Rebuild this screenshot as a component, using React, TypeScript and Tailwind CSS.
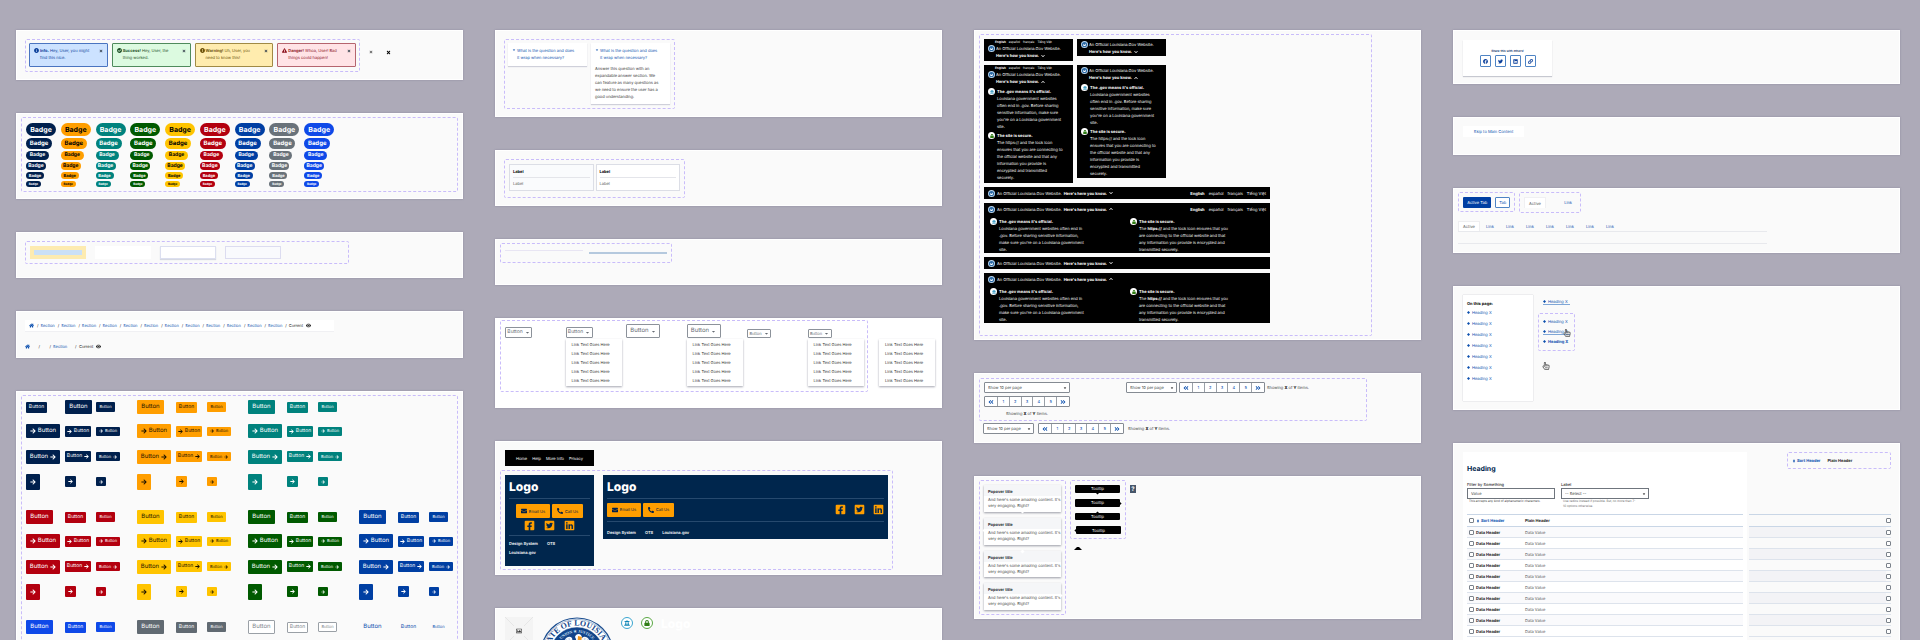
import type { ReactNode } from "react";
import {
  FaAngleDoubleLeft,
  FaAngleDoubleRight,
  FaArrowRight,
  FaCaretDown,
  FaCheckCircle,
  FaChevronDown,
  FaChevronUp,
  FaEnvelope,
  FaExclamationCircle,
  FaExclamationTriangle,
  FaEye,
  FaFacebook,
  FaFacebookSquare,
  FaHome,
  FaInfoCircle,
  FaLink,
  FaLinkedin,
  FaLock,
  FaPhoneAlt,
  FaRegHandPointer,
  FaRegImage,
  FaSort,
  FaTimes,
  FaTwitter,
  FaTwitterSquare,
  FaUniversity,
} from "react-icons/fa";

type Box = { className?: string; children?: ReactNode };

function Panel({ className = "", children }: Box) {
  return <section className={`border border-white bg-[#fafafa] shadow-[0_0_2px_#8f8b9e] ${className}`}>{children}</section>;
}

function Frame({ className = "", children }: Box) {
  return <div className={`shrink-0 rounded-[2px] border border-dashed border-[#c9bcfa] ${className}`}>{children}</div>;
}

function Lines({ lines }: { lines: ReactNode[] }) {
  return (
    <>
      {lines.map((line, i) => (
        <span key={i} className="block whitespace-nowrap">
          {line}
        </span>
      ))}
    </>
  );
}

/* ---------- Column one ---------- */

const alerts = [
  { tone: "border-[#4a74c0] bg-[#cce2ff] text-[#0b3f9a]", icon: <FaInfoCircle />, title: "Info.", rest: " Hey, User, you might", second: "find this nice." },
  { tone: "border-[#4f8a5c] bg-[#dcfae0] text-[#1d4f26]", icon: <FaCheckCircle />, title: "Success!", rest: " Hey, User, the", second: "thing worked." },
  { tone: "border-[#a08a45] bg-[#ffecae] text-[#6b5008]", icon: <FaExclamationCircle />, title: "Warning!", rest: " Uh, User, you", second: "need to know this!" },
  { tone: "border-[#b5646e] bg-[#ffe3e6] text-[#8a0f1c]", icon: <FaExclamationTriangle />, title: "Danger!", rest: " Whoa, User! Bad", second: "things could happen!" },
];

function AlertsPanel() {
  return (
    <Panel className="flex min-h-[50px] gap-[9px] px-2 pt-2">
      <Frame className="grid h-[33px] w-[335px] grid-cols-4 gap-1 p-[3px]">
        {alerts.map((a) => (
          <div key={a.title} role="alert" className={`flex h-6 items-start gap-px rounded-[1px] border px-1 pt-[3px] ${a.tone}`}>
            <span className="pt-[1px] text-[5px]">{a.icon}</span>
            <p className="grow">
              <Lines lines={[<><b>{a.title}</b>{a.rest}</>, a.second]} />
            </p>
            <button aria-label="Dismiss" className="pt-[2px] text-[4px] text-[#35404c]">
              <FaTimes />
            </button>
          </div>
        ))}
      </Frame>
      <button aria-label="Close" className="mt-[11px] self-start text-[4px] text-[#555]">
        <FaTimes />
      </button>
      <button aria-label="Close" className="mt-[11px] ml-1 self-start text-[5px] text-black">
        <FaTimes />
      </button>
    </Panel>
  );
}

const badgeTones = [
  "bg-[#00204d] text-white",
  "bg-[#ff9e00] text-black",
  "bg-[#00827d] text-white",
  "bg-[#005a00] text-white",
  "bg-[#ffc400] text-black",
  "bg-[#b3000f] text-white",
  "bg-[#003fa3] text-white",
  "bg-[#69727a] text-white",
  "bg-[#0f49e8] text-white",
];
const badgeSizes = [
  "h-[13px] w-[30px] text-[7px]",
  "h-[11px] w-[26px] text-[6px]",
  "h-[9px] w-[23px] text-[5px]",
  "h-[8px] w-[20px] text-[5px]",
  "h-[7px] w-[18px] text-[4px]",
  "h-[6px] w-[15px] text-[3px]",
];

function BadgesPanel() {
  return (
    <Panel className="min-h-[86px] px-1 pt-[3px]">
      <Frame className="h-[75px] w-full px-1 pt-[5px]">
        <div className="grid w-[313px] grid-cols-9">
          {badgeTones.map((tone) => (
            <div key={tone} className="flex flex-col items-start gap-[2px]">
              {badgeSizes.map((size) => (
                <span key={size} className={`flex items-center justify-center rounded-full font-bold ${size} ${tone}`}>
                  Badge
                </span>
              ))}
            </div>
          ))}
        </div>
      </Frame>
    </Panel>
  );
}

function SurfacesPanel() {
  return (
    <Panel className="min-h-[46px] px-2 pt-2">
      <Frame className="flex h-[23px] w-[324px] gap-[9px] p-1">
        <div className="h-[13px] w-14 bg-[#fdebb0] p-1">
          <div className="h-[5px] bg-[#cbe0f6]" />
        </div>
        <div className="h-[13px] w-14 bg-white" />
        <div className="h-[13px] w-14 border border-[#dcdff0] bg-white shadow-[0_1px_1px_#d5d8e2]" />
        <div className="h-[13px] w-14 border border-[#dcdcf0] bg-[#f9fafd]" />
      </Frame>
    </Panel>
  );
}

function BreadcrumbPanel() {
  return (
    <Panel className="flex min-h-[47px] flex-col items-start gap-2 px-2 pt-2 text-[#222]">
      <nav aria-label="Breadcrumb" className="flex h-[12px] w-[309px] items-center gap-[2px] border-b border-[#f0f0f3] bg-white px-1">
        <a href="#home" aria-label="Home" className="text-[5px] text-[#0b4fae]">
          <FaHome />
        </a>
        {Array.from({ length: 12 }, (_, i) => (
          <span key={i} className="flex gap-[2px] pl-[1px]">
            <span>/</span>
            <a href="#section" className="text-[#0b4fae]">
              Section
            </a>
          </span>
        ))}
        <span className="pl-px">/</span>
        <span>Current</span>
        <FaEye className="ml-px text-[5px]" />
      </nav>
      <nav aria-label="Collapsed breadcrumb" className="flex h-[12px] items-center">
        <a href="#home" aria-label="Home" className="text-[5px] text-[#0b4fae]">
          <FaHome />
        </a>
        <span className="w-[10px] text-right">/</span>
        <span className="w-[11px] text-right">/</span>
        <a href="#section" className="w-[24px] pl-[2px] text-[#0b4fae]">
          Section
        </a>
        <span className="w-1">/</span>
        <span>Current</span>
        <FaEye className="ml-[3px] text-[5px]" />
      </nav>
    </Panel>
  );
}

type Size = "lg" | "md" | "sm";
const textSize: Record<Size, string> = { lg: "text-[6px]", md: "text-[5px]", sm: "text-[4px]" };
const plainSize: Record<Size, string> = { lg: "h-[14px] w-[27px]", md: "h-[11px] w-[21px]", sm: "h-[10px] w-[19px]" };
const iconSize: Record<Size, string> = { lg: "h-[14px] w-[34px]", md: "h-[11px] w-[26px]", sm: "h-[9px] w-[24px]" };
const squareSize: Record<Size, string> = { lg: "h-4 w-[14px]", md: "h-[11px] w-[11px]", sm: "h-[9px] w-[10px]" };
type Kind = "plain" | "before" | "after" | "only";

function Btn({ tone, size, kind = "plain" }: { tone: string; size: Size; kind?: Kind }) {
  const dims = kind === "plain" ? plainSize[size] : kind === "only" ? squareSize[size] : iconSize[size];
  return (
    <button
      aria-label={kind === "only" ? "Next" : undefined}
      className={`flex items-center justify-center gap-[2px] rounded-[1px] leading-none ${dims} ${textSize[size]} ${tone}`}
    >
      {(kind === "before" || kind === "only") && <FaArrowRight />}
      {kind !== "only" && "Button"}
      {kind === "after" && <FaArrowRight />}
    </button>
  );
}

const kinds: Kind[] = ["plain", "before", "after", "only"];
const sizes: Size[] = ["lg", "md", "sm"];

function BtnGroup({ tone, mediumFirst = false, rows = kinds }: { tone: string; mediumFirst?: boolean; rows?: Kind[] }) {
  return (
    <div className="grid w-[111px] shrink-0 grid-cols-[39px_31px_auto] grid-rows-[22px_26px_25px_25px] items-center">
      {rows.map((kind) =>
        sizes.map((size, i) => (
          <Btn key={kind + size} tone={tone} kind={kind} size={mediumFirst && kind === "plain" && i < 2 ? (i === 0 ? "md" : "lg") : size} />
        )),
      )}
    </div>
  );
}

function ButtonsPanel() {
  return (
    <Panel className="min-h-[330px] px-1 pt-[3px]">
      <Frame className="flex h-[320px] w-full flex-col gap-3 px-1">
        <div className="flex">
          <BtnGroup tone="bg-[#00204d] text-white" mediumFirst />
          <BtnGroup tone="bg-[#ff9e00] text-[#1c1300]" />
          <BtnGroup tone="bg-[#00827d] text-white" />
        </div>
        <div className="flex">
          <BtnGroup tone="bg-[#b3000f] text-white" />
          <BtnGroup tone="bg-[#ffc400] text-[#1c1300]" />
          <BtnGroup tone="bg-[#005a00] text-white" />
          <BtnGroup tone="bg-[#003fa3] text-white" />
        </div>
        <div className="flex">
          <BtnGroup tone="bg-[#0f49e8] text-white" rows={["plain"]} />
          <BtnGroup tone="bg-[#616a72] text-white" rows={["plain"]} />
          <BtnGroup tone="border border-[#9aa0a6] bg-white text-[#80868c]" rows={["plain"]} />
          <BtnGroup tone="text-[#0b4fae]" rows={["plain"]} />
        </div>
      </Frame>
    </Panel>
  );
}

/* ---------- Column two ---------- */

function Question() {
  return (
    <h3 className="flex gap-px text-[#0b4fae]">
      <FaCaretDown className="mt-px text-[4px]" />
      <span>
        <Lines lines={["What is the question and does", "it wrap when necessary?"]} />
      </span>
    </h3>
  );
}

function AccordionPanel() {
  return (
    <Panel className="min-h-[87px] px-2 pt-2">
      <Frame className="flex h-[70px] w-[171px] items-start gap-1 p-[3px]">
        <div className="h-[23px] w-[79px] bg-white px-1 pt-1 shadow-[0_1px_1px_#cfd0da]">
          <Question />
        </div>
        <div className="h-[61px] w-[79px] bg-white px-1 pt-1 shadow-[0_1px_1px_#cfd0da]">
          <Question />
          <p className="mt-1 text-[#333]">
            <Lines
              lines={[
                "Answer this question with an",
                "expandable answer section. We",
                "can feature as many questions as",
                "we need to ensure the user has a",
                "good understanding.",
              ]}
            />
          </p>
        </div>
      </Frame>
    </Panel>
  );
}

function LabelsPanel() {
  return (
    <Panel className="min-h-[56px] px-2 pt-2">
      <Frame className="flex h-[39px] w-[181px] items-start gap-[2px] p-1">
        {["bg-[#fafbfd]", "bg-white"].map((bg) => (
          <div key={bg} className={`h-[27px] w-[85px] border border-[#dcdee6] px-[3px] pt-[3px] ${bg}`}>
            <p className="font-bold text-black">Label</p>
            <hr className="my-[2px] border-[#e4e5ea]" />
            <p className="text-[#555]">Label</p>
          </div>
        ))}
      </Frame>
    </Panel>
  );
}

function DividersPanel() {
  return (
    <Panel className="min-h-[46px] px-1 pt-[3px]">
      <Frame className="flex h-5 w-[172px] gap-[6px] px-1 pt-[6px]">
        <hr className="w-[78px] border-[#e8e5f3]" />
        <hr className="mt-[2px] w-[78px] border-t-2 border-[#b5c9de]" />
      </Frame>
    </Panel>
  );
}

function Menu() {
  return (
    <ul className="mt-px w-14 bg-white px-[6px] py-px text-[#333] shadow-[0_1px_2px_#a4a6b0]">
      {[0, 1, 2, 3, 4].map((i) => (
        <li key={i} className="h-[9px] pt-px whitespace-nowrap">
          <a href="#link">Link Text Goes Here</a>
        </li>
      ))}
    </ul>
  );
}

const dropdowns = [
  { size: "h-[11px] w-[27px] text-[5px]", open: false },
  { size: "h-[11px] w-[27px] text-[5px]", open: true },
  { size: "h-[14px] w-[34px] text-[6px]", open: false },
  { size: "h-[14px] w-[34px] text-[6px]", open: true },
  { size: "h-[9px] w-[24px] text-[4px]", open: false },
  { size: "h-[9px] w-[24px] text-[4px]", open: true },
];

function DropdownsPanel() {
  return (
    <Panel className="flex min-h-[90px] bg-white px-1 pt-px">
      <Frame className="flex h-[72px] w-[368px] px-1 pt-[3px]">
        <div className="grid w-[363px] shrink-0 grid-cols-6">
          {dropdowns.map((d, i) => (
            <div key={i}>
              <div className="flex h-[14px] items-end">
                <button className={`flex items-center justify-center gap-[2px] rounded-[1px] border border-[#8c929a] bg-white leading-none text-[#656b73] ${d.size}`}>
                  Button <FaCaretDown className="text-[5px]" />
                </button>
              </div>
              {d.open && <Menu />}
            </div>
          ))}
        </div>
      </Frame>
      <div className="pt-[18px] pl-[11px]">
        <Menu />
      </div>
    </Panel>
  );
}

function ContactButtons() {
  return (
    <div className="flex gap-[2px] text-[4px] text-[#00204d]">
      <button className="flex h-[14px] w-[34px] items-center justify-center gap-[2px] rounded-[1px] bg-[#ff9e00]">
        <FaEnvelope className="text-[6px]" /> Email Us
      </button>
      <button className="flex h-[14px] w-[31px] items-center justify-center gap-[2px] rounded-[1px] bg-[#ff9e00]">
        <FaPhoneAlt className="text-[6px]" /> Call Us
      </button>
    </div>
  );
}

function Socials({ className = "" }: Box) {
  return (
    <div className={`flex text-[11px] text-[#ff9e00] ${className}`}>
      <a href="#facebook" aria-label="Facebook"><FaFacebookSquare /></a>
      <a href="#twitter" aria-label="Twitter"><FaTwitterSquare /></a>
      <a href="#linkedin" aria-label="LinkedIn"><FaLinkedin /></a>
    </div>
  );
}

function FooterPanel() {
  return (
    <Panel className="min-h-[134px] pt-2">
      <nav aria-label="Utility" className="ml-[9px] flex h-4 w-[89px] items-center justify-center gap-[5px] bg-black text-white">
        <a href="#home">Home</a>
        <a href="#help">Help</a>
        <a href="#info">More Info</a>
        <a href="#privacy">Privacy</a>
      </nav>
      <Frame className="mt-1 ml-1 flex h-[100px] w-[393px] items-start gap-[9px] p-1">
        <footer className="h-[91px] w-[89px] bg-[#00264d] px-1 text-white">
          <p className="h-[23px] pt-[6px] text-[12px] leading-[12px] font-extrabold">Logo</p>
          <hr className="border-[#26496e]" />
          <div className="flex flex-col items-center gap-[2px] pt-[5px]">
            <ContactButtons />
            <Socials className="gap-[9px]" />
          </div>
          <hr className="mt-1 border-[#26496e]" />
          <div className="flex flex-wrap gap-x-[9px] gap-y-[2px] pt-1 font-semibold">
            <a href="#ds">Design System</a>
            <a href="#ots">OTS</a>
            <a href="#la" className="w-full">Louisiana.gov</a>
          </div>
        </footer>
        <footer className="h-[64px] w-[285px] bg-[#00264d] px-1 text-white">
          <p className="h-[23px] pt-[6px] text-[12px] leading-[12px] font-extrabold">Logo</p>
          <hr className="border-[#26496e]" />
          <div className="flex h-[22px] items-center justify-between pb-px">
            <ContactButtons />
            <Socials className="gap-2" />
          </div>
          <hr className="border-[#26496e]" />
          <div className="flex gap-[9px] pt-[7px] font-semibold">
            <a href="#ds">Design System</a>
            <a href="#ots">OTS</a>
            <a href="#la">Louisiana.gov</a>
          </div>
        </footer>
      </Frame>
    </Panel>
  );
}

function Seal() {
  return (
    <svg viewBox="-37 -37 74 74" className="h-[74px] w-[74px] shrink-0" role="img" aria-label="State seal">
      <defs>
        <path id="ring-outer" d="M-28.5 0A28.5 28.5 0 0 1 28.5 0" />
        <path id="ring-inner" d="M-21.5 0A21.5 21.5 0 0 1 21.5 0" />
      </defs>
      <circle r="36" fill="#fff" stroke="#1d4f91" strokeWidth="1.2" />
      <circle r="34.6" fill="none" stroke="#1d4f91" strokeWidth="0.4" />
      <circle r="27" fill="#12448a" stroke="#fff" strokeWidth="0.5" />
      <text fontFamily="Liberation Serif, serif" fontWeight="700" fontSize="8" fill="#12448a" textAnchor="middle">
        <textPath href="#ring-outer" startOffset="50%">STATE OF LOUISIANA</textPath>
      </text>
      <text fontFamily="Liberation Serif, serif" fontWeight="700" fontSize="4" fill="#cfe0f5" textAnchor="middle">
        <textPath href="#ring-inner" startOffset="50%">UNION ★ JUSTICE</textPath>
      </text>
      <path d="M-14 -9C-13 -16 -8 -19 -5 -16L-3 -6L-6 4L-14 2Z" fill="#f4f7fb" />
      <path d="M14 -9C13 -16 8 -19 5 -16L4 -6L6 4L14 2Z" fill="#f4f7fb" />
      <path d="M-2 -17C-1 -21 5 -21 5 -16C5 -12 2 -11 3 -6L0 2L-4 -4C-2 -8 1 -12 -2 -17Z" fill="#fff" />
      <path d="M1 -18L5 -17L3 -9L0 -6Z" fill="#f29a1f" />
      <path d="M-11 -15L-9 -5M-8 -16L-6 -5M11 -15L9 -5M8 -16L6 -5" stroke="#8fb0d8" strokeWidth="0.6" />
    </svg>
  );
}

function LogosPanel() {
  return (
    <Panel className="flex min-h-[110px] pt-2 pl-[9px]">
      <svg viewBox="0 0 28 28" className="h-7 w-7 bg-[#f4f4f4]" aria-hidden="true">
        <path d="M0 0L28 28M28 0L0 28" stroke="#e6e6e6" strokeWidth="1" />
        <rect x="9" y="9" width="10" height="10" fill="#f4f4f4" />
        <g transform="translate(11 11)">
          <FaRegImage size={6} color="#333" />
        </g>
      </svg>
      <div className="ml-[7px]">
        <Seal />
      </div>
      <span className="ml-[7px] flex h-3 w-3 items-center justify-center rounded-full border border-[#3aa5cf] bg-white text-[6px] text-[#0b84b5]">
        <FaUniversity />
      </span>
      <span className="ml-2 flex h-3 w-3 items-center justify-center rounded-full border border-[#5aa843] bg-white text-[6px] text-[#2f7d14]">
        <FaLock />
      </span>
      <span className="ml-2 text-[12px] leading-[14px] font-extrabold text-white">Logo</span>
    </Panel>
  );
}

/* ---------- Column three ---------- */

const blueTitle = "The .gov means it's official.";
const narrowGov = ["Louisiana government websites", "often end in .gov. Before sharing", "sensitive information, make sure", "you're on a Louisiana government", "site."];
const narrowSecure = ["The https:// and the lock icon", "ensures that you are connecting to", "the official website and that any", "information you provide is", "encrypted and transmitted", "securely."];
const wideGov = ["Louisiana government websites often end in", ".gov. Before sharing sensitive information,", "make sure you're on a Louisiana government", "site."];
const wideSecure: ReactNode[] = [
  <>The <b>https://</b> and the lock icon ensures that you</>,
  "are connecting to the official website and that",
  "any information you provide is encrypted and",
  "transmitted securely.",
];

function SealDot() {
  return (
    <svg viewBox="0 0 14 14" className="h-[7px] w-[7px] shrink-0" aria-hidden="true">
      <circle cx="7" cy="7" r="7" fill="#b9d6ef" />
      <circle cx="7" cy="7" r="5.2" fill="#2d6aa5" />
      <path d="M4 6L7 8L10 5L9 10H5Z" fill="#fff" />
    </svg>
  );
}

function Dot({ secure = false }: { secure?: boolean }) {
  return (
    <span className={`flex h-[7px] w-[7px] shrink-0 items-center justify-center rounded-full bg-white text-[4px] ${secure ? "text-[#2f7d14]" : "text-[#0b84b5]"}`}>
      {secure ? <FaLock /> : <FaUniversity />}
    </span>
  );
}

function Languages({ className = "" }: Box) {
  return (
    <div className={`flex ${className}`}>
      <b>English</b>
      <span lang="es">español</span>
      <span lang="fr">français</span>
      <span lang="vi">Tiếng Việt</span>
    </div>
  );
}

function Entry({ secure = false, lines, className = "" }: { secure?: boolean; lines: ReactNode[]; className?: string }) {
  return (
    <div className={`flex gap-[2px] ${className}`}>
      <Dot secure={secure} />
      <div>
        <b className="block">{secure ? "The site is secure." : blueTitle}</b>
        <Lines lines={lines} />
      </div>
    </div>
  );
}

function NarrowBanner({ languages = false, open = false, className = "" }: { languages?: boolean; open?: boolean; className?: string }) {
  return (
    <div className={`w-[89px] bg-black pl-1 text-white ${className}`}>
      {languages ? <Languages className="h-[6px] gap-[3px] pl-[7px] text-[3px] leading-[6px]" /> : <div className="h-[2px]" />}
      <div className="flex gap-px">
        <SealDot />
        <div className="whitespace-nowrap">
          <p>An Official Louisiana.Gov Website.</p>
          <button className="flex items-center gap-[2px] font-bold">
            Here's how you know. {open ? <FaChevronUp /> : <FaChevronDown />}
          </button>
        </div>
      </div>
      {open && (
        <>
          <Entry lines={narrowGov} className="mt-[3px]" />
          <Entry secure lines={narrowSecure} className="mt-[2px]" />
        </>
      )}
    </div>
  );
}

function WideBanner({ languages = false, open = false }: { languages?: boolean; open?: boolean }) {
  return (
    <div className={`w-[286px] bg-black text-white ${open ? "h-[50px]" : "h-[12px]"}`}>
      <div className="flex h-3 items-center gap-[2px] px-1">
        <SealDot />
        <span>An Official Louisiana.Gov Website.</span>
        <button className="flex items-center gap-[2px] font-bold">
          Here's here you know. {open ? <FaChevronUp /> : <FaChevronDown />}
        </button>
        {languages && <Languages className="ml-auto gap-1" />}
      </div>
      {open && (
        <div className="grid grid-cols-2 pt-[3px] pl-[6px]">
          <Entry lines={wideGov} />
          <Entry secure lines={wideSecure} />
        </div>
      )}
    </div>
  );
}

function BannersPanel() {
  return (
    <Panel className="min-h-[310px] px-1 pt-[3px]">
      <Frame className="flex h-[302px] w-[393px] flex-col items-start gap-1 p-1">
        <div className="grid grid-cols-2 items-start gap-[4px]">
          <NarrowBanner languages className="h-[22px]" />
          <NarrowBanner className="h-[17px]" />
          <NarrowBanner languages open className="h-[118px]" />
          <NarrowBanner open className="h-[113px]" />
        </div>
        <WideBanner languages />
        <WideBanner languages open />
        <WideBanner />
        <WideBanner open />
      </Frame>
    </Panel>
  );
}

function PerPage({ className = "" }: Box) {
  return (
    <span className={`relative block ${className}`}>
      <select aria-label="Items per page" className="h-[11px] w-full appearance-none rounded-[1px] border border-[#858b93] bg-white px-[3px] text-[4px] leading-[7px] text-[#444]">
        <option>Show 10 per page</option>
      </select>
      <FaCaretDown className="pointer-events-none absolute top-[4px] right-[3px] text-[4px]" />
    </span>
  );
}

function Pager() {
  return (
    <nav aria-label="Pagination" className="flex h-[11px] w-[86px] divide-x divide-[#9aa0a8] rounded-[1px] border border-[#858b93] bg-white text-[#0b4fae]">
      <a href="#prev" aria-label="Previous" className="flex w-[13px] items-center justify-center text-[6px]"><FaAngleDoubleLeft /></a>
      {[1, 2, 3, 4, 5].map((n) => (
        <a key={n} href={`#${n}`} className="flex w-3 items-center justify-center">{n}</a>
      ))}
      <a href="#next" aria-label="Next" className="flex w-3 items-center justify-center text-[6px]"><FaAngleDoubleRight /></a>
    </nav>
  );
}

function Showing() {
  return <p className="whitespace-nowrap text-[#444]">Showing <b className="text-black">X</b> of <b className="text-black">Y</b> items.</p>;
}

function PaginationPanel() {
  return (
    <Panel className="min-h-[70px] px-1 pt-1">
      <Frame className="flex h-[43px] w-[388px] items-start p-1 pt-[3px]">
        <div className="flex w-[86px] flex-col items-center gap-[3px]">
          <PerPage className="w-full" />
          <Pager />
          <Showing />
        </div>
        <div className="ml-14 flex items-center gap-[2px]">
          <PerPage className="w-[51px]" />
          <Pager />
          <Showing />
        </div>
      </Frame>
      <div className="mt-[2px] ml-1 flex items-center gap-1">
        <PerPage className="w-[51px]" />
        <Pager />
        <Showing />
      </div>
    </Panel>
  );
}

function Popover({ caret }: { caret: string }) {
  return (
    <div className="relative h-[27px] w-[77px] bg-white shadow-[0_1px_2px_#9a9ca6]">
      <h4 className="h-[11px] bg-[#f5f6f8] px-1 pt-[3px] font-bold text-[#2b2f36]">Popover title</h4>
      <p className="px-1 pt-px leading-[6px] text-[#444]">
        <Lines lines={["And here's some amazing content. It's", "very engaging. Right?"]} />
      </p>
      <span className={`absolute h-[3px] w-[3px] rotate-45 bg-white ${caret}`} />
    </div>
  );
}

function Tip({ caret, className = "" }: { caret: string; className?: string }) {
  return (
    <div className={`relative flex h-[8px] w-[45px] items-center justify-center rounded-[1px] bg-black text-white ${className}`}>
      Tooltip
      <span className={`absolute h-[3px] w-[3px] rotate-45 bg-black ${caret}`} />
    </div>
  );
}

function PopoverPanel() {
  return (
    <Panel className="flex min-h-[143px] items-start gap-1 px-1 pt-[3px]">
      <Frame className="flex h-[135px] w-[87px] flex-col gap-[6px] p-[4px]">
        <Popover caret="-bottom-px left-[37px]" />
        <Popover caret="top-[11px] -left-px" />
        <Popover caret="-top-px left-[37px]" />
        <Popover caret="top-[11px] -right-px" />
      </Frame>
      <div>
        <Frame className="flex h-[59px] w-14 flex-col gap-[6px] p-[4px]">
          <Tip caret="-bottom-px left-[21px]" />
          <Tip caret="top-[3px] -right-px" />
          <Tip caret="-top-px left-[21px]" />
          <Tip caret="top-[3px] -left-px" className="ml-px" />
        </Frame>
        <svg viewBox="0 0 8 3" className="mt-2 ml-1 h-[3px] w-2" aria-hidden="true">
          <path d="M0 3L3 0H5L8 3Z" fill="#000" />
        </svg>
      </div>
      <span className="mt-[5px] flex h-2 w-[6px] items-center justify-center bg-[#46566a] text-[6px] font-bold text-white">?</span>
    </Panel>
  );
}

/* ---------- Column four ---------- */

function SharePanel() {
  return (
    <Panel className="min-h-[54px] pt-[9px] pl-[9px]">
      <div className="flex h-9 w-[89px] flex-col items-center bg-white pt-2 shadow-[0_1px_1px_#c6c8d0]">
        <p className="text-[3px] font-semibold text-[#0a2c66]">Share this with others!</p>
        <div className="flex gap-1 text-[5px] text-[#0b3f9a]">
          {[
            { name: "Facebook", icon: <FaFacebook /> },
            { name: "Twitter", icon: <FaTwitter /> },
            { name: "LinkedIn", icon: <FaLinkedin /> },
            { name: "Copy link", icon: <FaLink /> },
          ].map((s) => (
            <button key={s.name} aria-label={s.name} className="flex h-[12px] w-[11px] items-center justify-center rounded-[1px] border border-[#4f84c4] bg-white">
              {s.icon}
            </button>
          ))}
        </div>
      </div>
    </Panel>
  );
}

function SkipPanel() {
  return (
    <Panel className="min-h-[38px] pt-2 pl-[9px]">
      <a href="#main" className="flex h-[11px] w-[61px] items-center justify-center bg-white text-[#0b4fae]">
        Skip to Main Content
      </a>
    </Panel>
  );
}

function TabsPanel() {
  return (
    <Panel className="min-h-[65px] px-1 pt-[3px]">
      <div className="flex gap-1">
        <Frame className="flex h-[20px] w-[57px] gap-1 p-1">
          <button className="h-[11px] w-[29px] rounded-[1px] bg-[#003fa3] text-[4px] text-white">Active Tab</button>
          <button className="h-[11px] w-[15px] rounded-[1px] border border-[#4f84c4] bg-white text-[4px] text-[#0b4fae]">Tab</button>
        </Frame>
        <Frame className="flex h-[21px] w-[62px] items-center justify-between pr-2 pl-1">
          <button className="h-[11px] w-[22px] border border-b-0 border-[#f0f0f2] bg-white text-[#555]">Active</button>
          <a href="#link" className="text-[#0b4fae]">Link</a>
        </Frame>
      </div>
      <nav aria-label="Tabs" className="mt-2 flex h-[11px] w-[309px] border-b border-[#e8e9ed] text-[#0b4fae]">
        <a href="#active" className="flex w-[22px] items-center justify-center border border-b-0 border-[#eeeef0] bg-white text-[#555]">Active</a>
        {[0, 1, 2, 3, 4, 5, 6].map((i) => (
          <a key={i} href="#link" className="flex w-5 items-center justify-center">Link</a>
        ))}
      </nav>
      <hr className="mt-[11px] w-[309px] border-[#e8e9ed]" />
    </Panel>
  );
}

function HeadingLink({ className = "" }: Box) {
  return (
    <a href="#heading" className={`flex h-[7px] w-[27px] items-center gap-[2px] whitespace-nowrap text-[#0b4fae] ${className}`}>
      <svg viewBox="0 0 6 6" className="h-[3px] w-[3px] shrink-0" aria-hidden="true">
        <path d="M3 0L6 3L3 6L0 3Z" fill="currentColor" />
      </svg>
      Heading X
    </a>
  );
}

function OnThisPagePanel() {
  return (
    <Panel className="flex min-h-[124px] items-start pt-2 pl-[9px]">
      <nav aria-label="On this page" className="flex h-[106px] w-[70px] flex-col gap-1 bg-white px-1 pt-[5px] shadow-[0_0_1px_#a9abb5]">
        <p className="-mb-[2px] font-bold text-black">On this page:</p>
        {[0, 1, 2, 3, 4, 5, 6].map((i) => (
          <HeadingLink key={i} />
        ))}
      </nav>
      <div className="pl-[5px]">
        <HeadingLink className="mt-[3px] ml-[5px] border-b border-[#7fa6d6]" />
        <Frame className="mt-2 h-[38px] w-[37px] px-1 pt-[4px]">
          <HeadingLink />
          <div className="relative my-[3px]">
            <HeadingLink className="border-b border-[#7fa6d6]" />
            <FaRegHandPointer className="absolute top-px left-[20px] text-[8px] text-[#555]" />
          </div>
          <HeadingLink className="font-bold" />
        </Frame>
        <FaRegHandPointer className="mt-[11px] ml-1 text-[8px] text-[#555]" />
      </div>
    </Panel>
  );
}

const rowNumbers = Array.from({ length: 10 }, (_, i) => i);

function Check({ label }: { label: string }) {
  return <input type="checkbox" aria-label={label} className="block h-[5px] w-[5px] appearance-none rounded-[1px] border border-[#7b828b] bg-white" />;
}

function SortLabel() {
  return (
    <button className="flex items-center gap-px font-bold text-[#0b4fae]">
      <FaSort /> Sort Header
    </button>
  );
}

function TablePanel() {
  return (
    <Panel className="flex min-h-[300px] items-start pt-2 pl-[9px]">
      <div className="min-h-[300px] w-[284px] shrink-0 bg-white px-1 pt-3">
        <h2 className="text-[7px] leading-[10px] font-bold text-[#00264d]">Heading</h2>
        <div className="mt-[7px] flex h-[33px] items-start gap-[6px]">
          <div className="w-[88px]">
            <label htmlFor="filter" className="block font-medium text-[#333]">Filter by Something</label>
            <input id="filter" defaultValue="Value" className="block h-[11px] w-full border border-[#6f757d] bg-white px-[3px] text-[4px] leading-[7px] text-[#444]" />
            <p className="pl-[2px] text-[3px] leading-[5px] whitespace-nowrap text-[#333]">This accepts any kind of alphanumeric characters.</p>
          </div>
          <div className="w-[88px]">
            <label htmlFor="choice" className="block font-medium text-[#333]">Label</label>
            <span className="relative block">
              <select id="choice" className="block h-[11px] w-full appearance-none border border-[#6f757d] bg-white px-[3px] text-[4px] leading-[7px] text-[#333]">
                <option>-- Select --</option>
              </select>
              <FaCaretDown className="pointer-events-none absolute top-[4px] right-[3px] text-[4px]" />
            </span>
            <p className="pl-[2px] text-[3px] leading-[5px] text-[#666]">
              <Lines lines={["Use radios instead if possible. But, no more than 7-", "10 options otherwise."]} />
            </p>
          </div>
        </div>
        <table className="w-full border-collapse text-left">
          <thead>
            <tr className="h-[12px] border-y border-[#c9d6e6]">
              <th className="w-[9px] pl-[2px]"><Check label="Select all" /></th>
              <th className="w-[49px]"><SortLabel /></th>
              <th className="text-[#222]">Plain Header</th>
            </tr>
          </thead>
          <tbody>
            {rowNumbers.map((i) => (
              <tr key={i} className="h-[11px] border-b border-[#dde3ec] odd:bg-[#fafafc]">
                <td className="pl-[2px]"><Check label={`Select row ${i + 1}`} /></td>
                <th scope="row" className="text-[#222]">Data Header</th>
                <td className="text-[#555]">Data Value</td>
              </tr>
            ))}
          </tbody>
        </table>
      </div>
      <div className="mr-2 ml-[2px] flex grow flex-col items-end">
        <Frame className="flex h-[17px] w-[104px] items-center gap-[7px] px-1 text-[#222]">
          <SortLabel />
          <b>Plain Header</b>
        </Frame>
        <table className="mt-[45px] w-full border-collapse">
          <tbody>
            <tr className="h-[12px] border-y border-[#c9d6e6]">
              <td className="w-full" />
              <td><Check label="Select all" /></td>
            </tr>
            {rowNumbers.map((i) => (
              <tr key={i} className="h-[11px] border-b border-[#dde3ec] even:bg-[#f3f3f6]">
                <td className="w-full" />
                <td className="bg-[#fafafa]"><Check label={`Select row ${i + 1}`} /></td>
              </tr>
            ))}
          </tbody>
        </table>
      </div>
    </Panel>
  );
}

export default function App() {
  return (
    <main className="grid h-screen grid-cols-4 gap-8 overflow-hidden bg-[#adaab8] pt-[30px] pr-5 pl-4 font-['Inter','Noto_Sans',sans-serif] text-[4px] leading-[7px] [text-rendering:geometricPrecision] [&_button]:[text-rendering:geometricPrecision] [&_input]:[text-rendering:geometricPrecision] [&_select]:[text-rendering:geometricPrecision]">
      <div className="flex min-w-0 flex-col gap-[33px]">
        <AlertsPanel />
        <BadgesPanel />
        <SurfacesPanel />
        <BreadcrumbPanel />
        <ButtonsPanel />
      </div>
      <div className="flex min-w-0 flex-col gap-[33px]">
        <AccordionPanel />
        <LabelsPanel />
        <DividersPanel />
        <DropdownsPanel />
        <FooterPanel />
        <LogosPanel />
      </div>
      <div className="flex min-w-0 flex-col gap-[33px]">
        <BannersPanel />
        <PaginationPanel />
        <PopoverPanel />
      </div>
      <div className="flex min-w-0 flex-col gap-[33px]">
        <SharePanel />
        <SkipPanel />
        <TabsPanel />
        <OnThisPagePanel />
        <TablePanel />
      </div>
    </main>
  );
}
